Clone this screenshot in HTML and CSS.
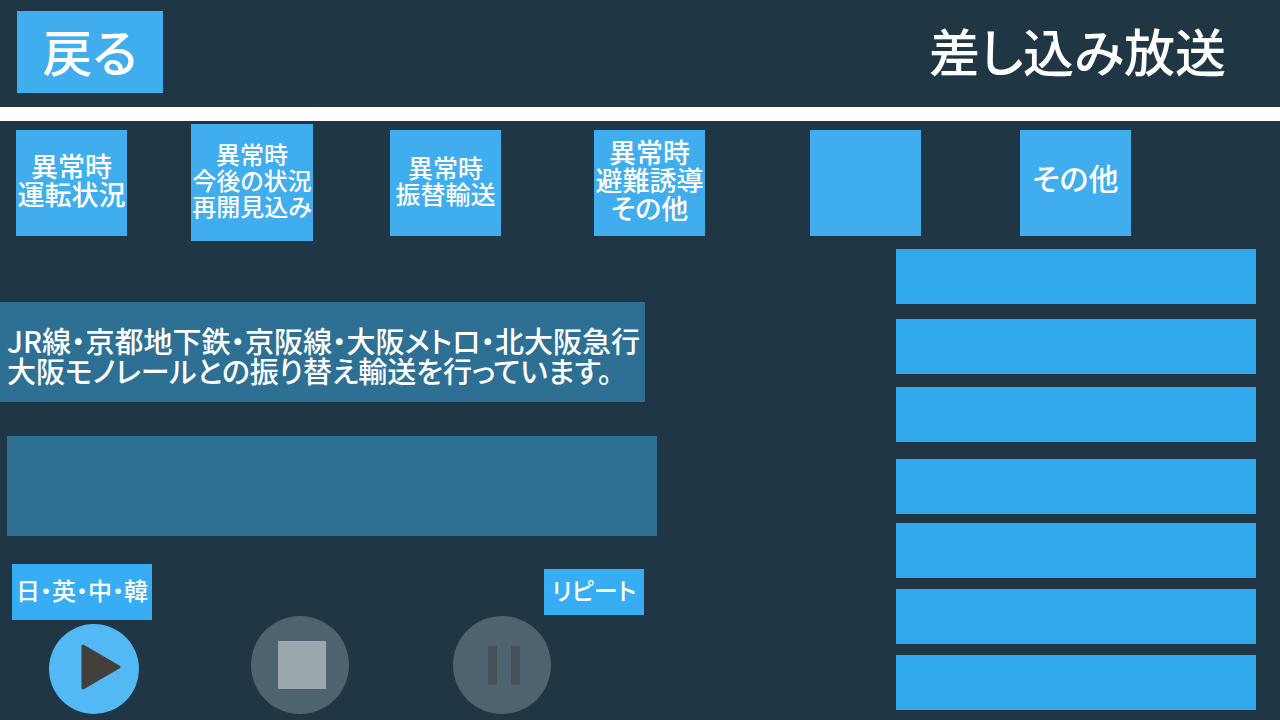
FILE: index.html
```html
<!DOCTYPE html>
<html lang="ja">
<head>
<meta charset="UTF-8" />
<meta name="viewport" content="width=device-width, initial-scale=1" />
<title>差し込み放送</title>
<link rel="stylesheet" href="styles.css">
</head>
<body>

  <header class="header">
    <button type="button" class="back">戻る</button>
    <h1>差し込み放送</h1>
  </header>

  <!-- Categories -->
  <nav class="tabs">
    <button type="button" class="tab large">異常時<br>運転状況</button>
    <button type="button" class="tab tall">異常時<br>今後の状況<br>再開見込み</button>
    <button type="button" class="tab">異常時<br>振替輸送</button>
    <button type="button" class="tab large">異常時<br>避難誘導<br>その他</button>
    <button type="button" class="tab"></button>
    <button type="button" class="tab other">その他</button>
  </nav>

  <main class="main">
    <div class="panel">
      <p class="message current">JR線・京都地下鉄・京阪線・大阪メトロ・北大阪急行<br>大阪モノレールとの振り替え輸送を行っています。</p>
      <p class="message next"></p>

      <div class="options">
        <button type="button" class="option lang">日・英・中・韓</button>
        <button type="button" class="option repeat">リピート</button>
      </div>

      <!-- Player -->
      <div class="player">
        <button type="button" class="round play" aria-label="再生">
          <svg viewBox="0 0 90 90"><path d="M34 22 L70 43 L34 64 Z" /></svg>
        </button>
        <button type="button" class="round stop" aria-label="停止">
          <svg viewBox="0 0 98 98"><rect x="27" y="25" width="48" height="48" /></svg>
        </button>
        <button type="button" class="round pause" aria-label="一時停止">
          <svg viewBox="0 0 98 98"><path d="M35 30h9v39h-9z M58 30h9v39h-9z" /></svg>
        </button>
      </div>
    </div>

    <!-- Announcement slots -->
    <div class="slots">
      <button type="button" class="slot"></button>
      <button type="button" class="slot"></button>
      <button type="button" class="slot"></button>
      <button type="button" class="slot"></button>
      <button type="button" class="slot"></button>
      <button type="button" class="slot"></button>
      <button type="button" class="slot"></button>
    </div>
  </main>

</body>
</html>
```
FILE: styles.css
```css
* {
  margin: 0; padding: 0; box-sizing: border-box;
}
body {
  background: #1f3744;
  color: #fff;
  font-family: "Noto Sans CJK JP", sans-serif;
  font-weight: 500;
  font-feature-settings: "palt";
}
button {
  border: none;
  color: inherit;
  font: inherit;
  font-feature-settings: inherit;
  white-space: nowrap;
  cursor: pointer;
}

/* Header */
.header {
  display: flex;
  justify-content: space-between;
  align-items: center;
  height: 121px;
  padding: 0 54px 3px 17px;
  border-bottom: 14px solid #fff;
}
.back {
  width: 146px;
  height: 82px;
  padding-bottom: 5px;
  background: #40adee;
  font-size: 50px;
  line-height: 52px;
}
h1 {
  padding-bottom: 5px;
  font-size: 51px;
  font-weight: 500;
  line-height: 52px;
}

/* Categories */
.tabs {
  display: grid;
  grid-template-columns: 175fr 199fr 204fr 216fr 210fr 260fr;
  align-items: center;
  padding: 3px 0 0 16px;
}
.tab {
  width: 111px;
  height: 106px;
  padding-bottom: 5px;
  background: #40adee;
  font-size: 25px;
  line-height: 26px;
}
.tab.tall {
  width: 122px;
  height: 117px;
  font-size: 24px;
}
.tab.large {
  font-size: 27px;
  line-height: 28px;
}
.tab.other {
  padding-bottom: 12px;
  font-size: 30px;
}

/* Main */
.main {
  display: grid;
  grid-template-columns: 657fr 623fr;
  padding-top: 8px;
}
.panel {
  min-width: 0;
  padding-top: 53px;
}
.message {
  height: 100px;
  background: #2d7094;
  font-size: 29px;
  line-height: 30px;
  white-space: nowrap;
}
.message.current {
  margin-right: 12px;
  padding: 23px 0 0 7px;
}
.message.next {
  margin: 34px 0 0 7px;
}
.options {
  display: flex;
  justify-content: space-between;
  align-items: center;
  margin-top: 28px;
  padding: 0 13px 0 12px;
}
.option {
  padding-bottom: 4px;
  background: #37adf3;
  font-size: 24px;
  line-height: 28px;
}
.lang {
  width: 140px;
  height: 56px;
}
.repeat {
  width: 100px;
  height: 46px;
}

/* Player */
.player {
  display: grid;
  grid-template-columns: 202fr 202fr 204fr;
  align-items: end;
  margin-top: -4px;
  padding-left: 49px;
}
.round {
  width: 98px;
  height: 98px;
  border-radius: 50%;
  background: #4d636f;
}
.round svg {
  display: block;
  width: 100%;
}
.play {
  width: 90px;
  height: 90px;
  background: #53b9f5;
}
.play path {
  fill: #433f3b;
  stroke: #433f3b;
  stroke-width: 3;
  stroke-linejoin: round;
}
.stop rect {
  fill: #9aa8ad;
}
.pause path {
  fill: #485258;
}

/* Announcement slots */
.slots {
  display: grid;
  grid-template-rows: 70px 68px 72px 64px 66px 66px 55px;
  padding: 0 24px 0 239px;
}
.slot {
  height: 55px;
  background: #30a8ed;
}
```
